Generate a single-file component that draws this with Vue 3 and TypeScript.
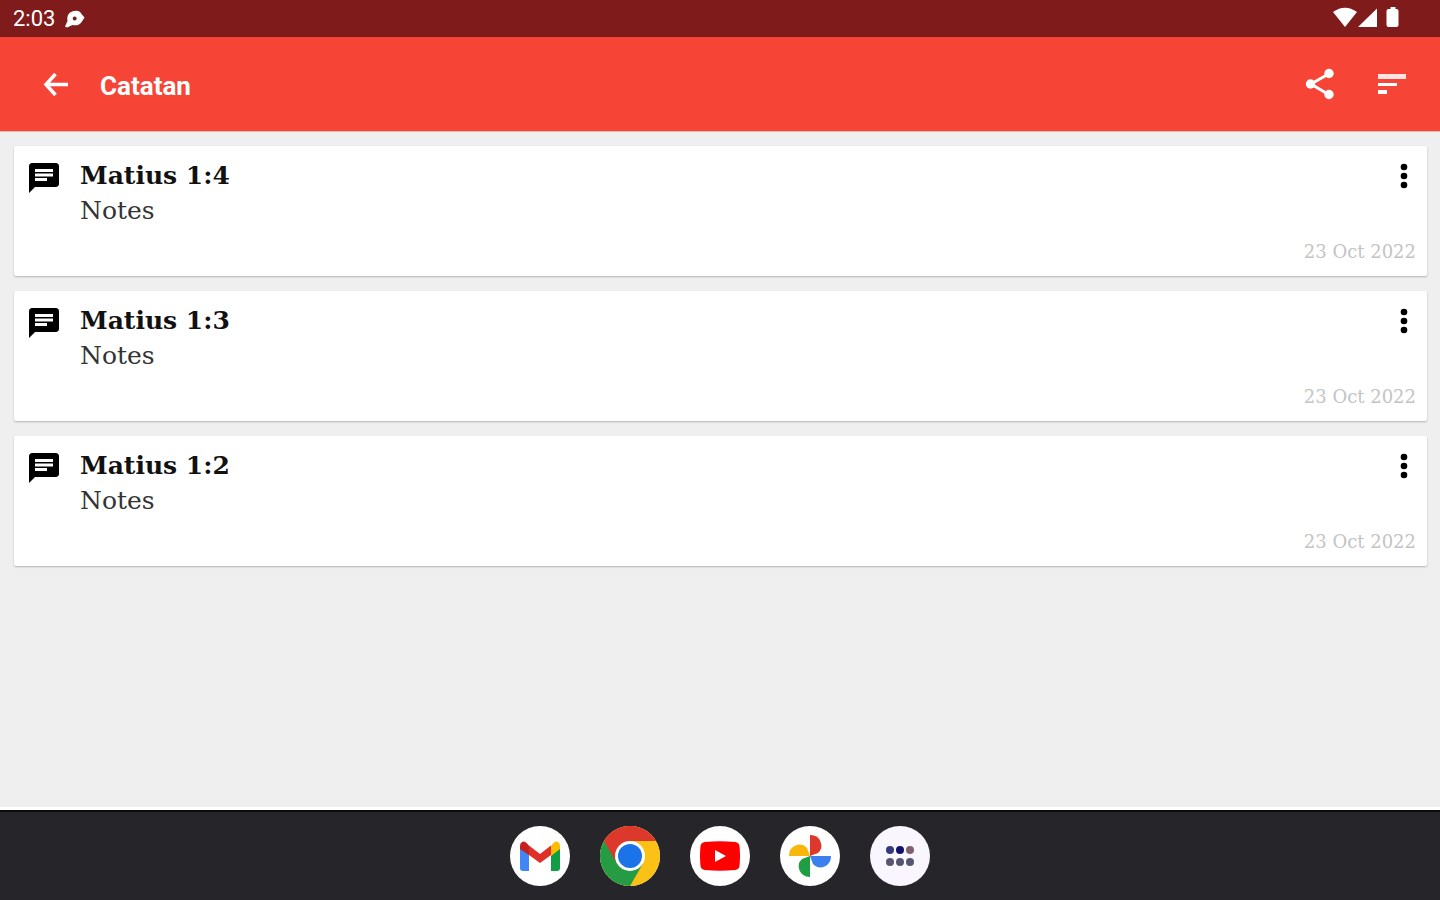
<script setup lang="ts">
import { ref } from 'vue'

interface Note {
  id: number
  verse: string
  body: string
  date: string
}

const notes = ref<Note[]>([
  { id: 1, verse: 'Matius 1:4', body: 'Notes', date: '23 Oct 2022' },
  { id: 2, verse: 'Matius 1:3', body: 'Notes', date: '23 Oct 2022' },
  { id: 3, verse: 'Matius 1:2', body: 'Notes', date: '23 Oct 2022' },
])
</script>

<template>
  <div class="screen">
    <div class="status">
      <div class="status-left">
        <span>2:03</span>
        <svg width="20" height="18" viewBox="0 0 20 18" aria-hidden="true">
          <path fill="#fff" fill-rule="evenodd" d="M9.5 1C13 0 15.500 1.500 16.500 4L19.500 7.500 17 11.500C15 15 11 16 7.500 15L2 17.500 0 16.500 2.500 11C1.500 5 4.500 1.500 9.500 1zM9.700 6.500a2 2 0 1 0 0 4 2 2 0 0 0 0-4z" />
        </svg>
      </div>
      <div class="status-right">
        <svg width="68" height="22" viewBox="0 0 68 22" fill="#fff" aria-hidden="true">
          <path d="M0 5Q12 -3.500 24 5L12 20z" />
          <path d="M44 1.500V20H25z" />
          <path d="M57.500 0h5v2h1q2 0 2 2v14q0 2-2 2h-8q-2 0-2-2V4q0-2 2-2h2z" />
        </svg>
      </div>
    </div>

    <header class="toolbar">
      <button class="icon-button" type="button" aria-label="Kembali">
        <svg width="36" height="36" viewBox="0 0 36 36" fill="none" stroke="#fff" stroke-width="3.500">
          <path d="M17.500 8L8 18.500 17.500 29M8 18.500h22" />
        </svg>
      </button>
      <h1>Catatan</h1>
      <button class="icon-button" type="button" aria-label="Bagikan">
        <svg width="36" height="36" viewBox="0 0 36 36" fill="#fff">
          <path d="M26.500 8L9 18l17.500 10.500" fill="none" stroke="#fff" stroke-width="3" />
          <circle cx="27" cy="7.500" r="4.700" />
          <circle cx="8.500" cy="18" r="4.700" />
          <circle cx="27" cy="28.500" r="4.700" />
        </svg>
      </button>
      <button class="icon-button" type="button" aria-label="Urutkan">
        <svg width="36" height="36" viewBox="0 0 36 36" fill="#fff">
          <path fill-opacity=".85" d="M4 8h28v5H4z" />
          <path d="M4 17h19v3H4zM4 24h9v4H4z" />
        </svg>
      </button>
    </header>

    <main class="notes">
      <article v-for="note in notes" :key="note.id" class="card">
        <svg class="note-icon" width="36" height="36" viewBox="0 0 24 24" aria-hidden="true">
          <path d="M20 2H4c-1.100 0-1.990.9-1.990 2L2 22l4-4h14c1.100 0 2-.900 2-2V4c0-1.100-.900-2-2-2zM6 9h12v2H6V9zm8 5H6v-2h8v2zm4-6H6V6h12v2z" />
        </svg>
        <div class="content">
          <h2>{{ note.verse }}</h2>
          <p>{{ note.body }}</p>
          <time datetime="2022-10-23">{{ note.date }}</time>
        </div>
        <button class="more" type="button" :aria-label="`Menu ${note.verse}`">
          <svg width="10" height="28" viewBox="0 0 10 28">
            <circle cx="5" cy="5" r="3.300" />
            <circle cx="5" cy="14" r="3.300" />
            <circle cx="5" cy="23" r="3.300" />
          </svg>
        </button>
      </article>
    </main>

    <nav class="dock">
      <button class="app" type="button" aria-label="Gmail">
        <svg width="40" height="30" viewBox="0 0 40 30">
          <path fill="#4285f4" d="M0 5l9 7v18H3q-3 0-3-3z" />
          <path fill="#109d43" d="M31 12l9-7v22q0 3-3 3h-6z" />
          <path fill="#fbbc04" d="M31 5l3-3.500Q36 0 38 1t2 4v3l-9 7z" />
          <path fill="#e02f27" d="M9 4.500L20 13l11-8.500V14L20 22 9 14z" />
          <path fill="#c5221f" d="M0 5Q0 2 2 1t4 .5l3 3V14L0 8z" />
        </svg>
      </button>
      <button class="app" type="button" aria-label="Chrome">
        <svg width="60" height="60" viewBox="0 0 60 60">
          <circle cx="30" cy="30" r="30" fill="#fbc116" />
          <path fill="#259c43" d="M4 15A30 30 0 0 0 30 60L43 37.500 30 30z" />
          <path fill="#dd382c" d="M4 15A30 30 0 0 1 56 15H30V30L17 37.500z" />
          <circle cx="30" cy="30" r="15" fill="#fff" />
          <circle cx="30" cy="30" r="12" fill="#1a73e8" />
        </svg>
      </button>
      <button class="app" type="button" aria-label="YouTube">
        <svg width="40" height="30" viewBox="0 0 40 30">
          <path fill="#f00" d="M5 1Q20-.500 35 1q4 .5 4.500 4 1 10 0 20-.5 3.500-4.500 4-15 1.500-30 0-4-.5-4.500-4-1-10 0-20Q1 1.500 5 1z" />
          <path fill="#fff" d="M15 9l11 6-11 6z" />
        </svg>
      </button>
      <button class="app" type="button" aria-label="Google Foto">
        <svg width="44" height="44" viewBox="0 0 44 44">
          <path fill="#dd382c" d="M22 1a11 10.500 0 0 1 8 18l-8 3z" />
          <path fill="#3b80ee" d="M43 22a10.500 11 0 0 1-18 8l-3-8z" />
          <path fill="#1f9d42" d="M22 43a11 10.500 0 0 1-8-18l8-3z" />
          <path fill="#f9b70b" d="M1 22a10.500 11 0 0 1 18-8l3 8z" />
        </svg>
      </button>
      <button class="app all-apps" type="button" aria-label="Semua aplikasi">
        <svg width="30" height="22" viewBox="0 0 30 22" fill="#55556f">
          <circle cx="5" cy="5" r="4" fill="#343b7c" />
          <circle cx="15" cy="5" r="4" fill="#10106e" />
          <circle cx="25" cy="5" r="4" fill="#80606f" />
          <circle cx="5" cy="17" r="4" />
          <circle cx="15" cy="17" r="4" />
          <circle cx="25" cy="17" r="4" />
        </svg>
      </button>
    </nav>
  </div>
</template>

<style>
body {
  margin: 0;
}
</style>

<style scoped>
.screen {
  display: flex;
  flex-direction: column;
  min-height: 100vh;
  background: #efefef;
  font-family: Roboto, "Liberation Sans", sans-serif;
}

h1,
h2,
p {
  margin: 0;
}

button {
  display: flex;
  align-items: center;
  justify-content: center;
  padding: 0;
  border: 0;
  background: none;
  cursor: pointer;
}

svg {
  display: block;
  flex: none;
}

.status {
  display: flex;
  justify-content: space-between;
  height: 37px;
  padding: 0 39px 0 13px;
  background: #7f1b1b;
  color: #fff;
}

.status-left {
  display: flex;
  align-items: center;
  gap: 10px;
  font-size: 22px;
  line-height: 38px;
}

.status-right {
  padding-top: 7px;
}

.toolbar {
  display: flex;
  align-items: center;
  height: 95px;
  padding: 0 12px 0 20px;
  border-bottom: 1px solid #e0b8b4;
  background: #f64436;
  box-sizing: border-box;
}

.icon-button {
  width: 72px;
  height: 72px;
}

h1 {
  flex: 1;
  margin-left: 8px;
  padding-top: 4px;
  color: #fff;
  font-size: 26px;
  font-weight: 700;
  line-height: 32px;
}

.notes {
  display: flex;
  flex: 1;
  flex-direction: column;
  gap: 15px;
  padding: 14px 13px 14px 14px;
  border-bottom: 3px solid #fff;
}

.card {
  display: flex;
  align-items: flex-start;
  padding: 12px 11px 12px 12px;
  border-radius: 2px;
  background: #fff;
  box-shadow: 0 1px 2px rgba(0, 0, 0, 0.25);
  color: #111;
  font-family: "DejaVu Serif", serif;
}

.content {
  display: flex;
  flex: 1;
  flex-direction: column;
  margin-left: 18px;
}

h2,
p {
  font-size: 25px;
  line-height: 35px;
}

h2 {
  font-weight: 700;
}

p {
  color: #333;
}

time {
  align-self: flex-end;
  margin-top: 12px;
  color: #c4c4c4;
  font-size: 18px;
  line-height: 24px;
}

.note-icon {
  margin-top: 2px;
}

.more {
  width: 24px;
  height: 36px;
  margin-left: -24px;
}

.dock {
  display: flex;
  align-items: center;
  justify-content: center;
  gap: 30px;
  height: 90px;
  border-top: 2px solid #0c0c0e;
  background: #26262a;
  box-sizing: border-box;
}

.app {
  width: 60px;
  height: 60px;
  border-radius: 50%;
  background: #fff;
}

.all-apps {
  background: #faf6ff;
}
</style>
